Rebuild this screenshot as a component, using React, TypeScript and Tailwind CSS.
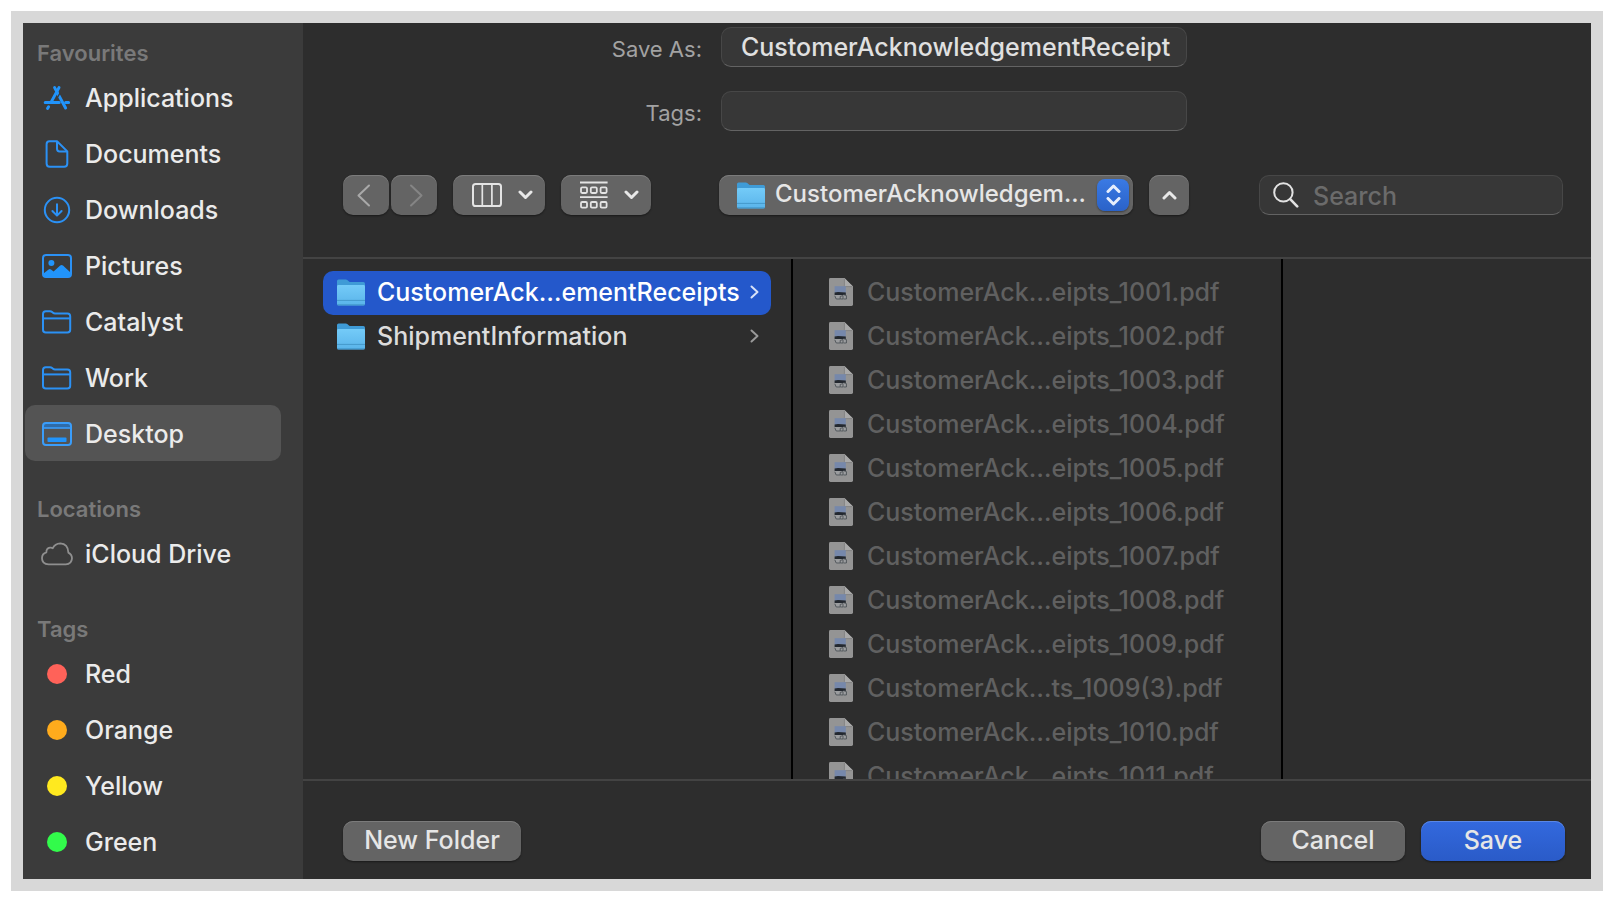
import { useState, type ReactNode } from "react";

function AppsIcon() {
  return (
    <svg width="28" height="26" viewBox="0 0 28 26" fill="none" stroke="#2194fb" strokeWidth="3" strokeLinecap="round">
      <path d="M16 2.6 8.4 16.6M5.6 21.8 4.6 23.4" />
      <path d="M11.6 2.6 22.6 23" />
      <path d="M2.2 17.4H16.2M22.6 17.4H25.6" />
      <path d="M17.2 7.6 14.4 12.6" stroke="#3b3b3b" strokeWidth="1.2" />
    </svg>
  );
}

function DocumentIcon() {
  return (
    <svg width="24" height="28" viewBox="0 0 24 28" fill="none" stroke="#2b91f5" strokeWidth="2" strokeLinejoin="round">
      <path d="M4.5 1.2H12L22.3 11.4V23.6Q22.3 26.8 19.1 26.8H4.7Q1.6 26.8 1.6 23.6V4.2Q1.6 1.2 4.5 1.2Z" />
      <path d="M12 1.6V8.8Q12 11.4 14.6 11.4H22" />
    </svg>
  );
}

function DownloadIcon() {
  return (
    <svg width="28" height="28" viewBox="0 0 28 28" fill="none" stroke="#2b91f5" strokeWidth="2" strokeLinecap="round" strokeLinejoin="round">
      <circle cx="14" cy="14" r="12.2" />
      <path d="M14 8.2V19.4M9.4 15 14 19.6 18.6 15" />
    </svg>
  );
}

function PictureIcon() {
  return (
    <svg width="30" height="24" viewBox="0 0 30 24">
      <rect x="1" y="1" width="28" height="22" rx="3" fill="none" stroke="#2b91f5" strokeWidth="2" />
      <circle cx="9.4" cy="9" r="3" fill="#2194fb" />
      <path d="M1.5 19.6 6.6 15.4Q7.8 14.5 9 15.5L11.6 17.6 18.2 11.6Q19.6 10.4 21 11.6L28.5 18.4V20.5Q28.5 23 26 23H4Q1.5 23 1.5 20.5Z" fill="#2194fb" />
    </svg>
  );
}

function FolderOutlineIcon() {
  return (
    <svg width="30" height="24" viewBox="0 0 30 24" fill="none" stroke="#2b91f5" strokeWidth="2" strokeLinejoin="round">
      <path d="M1 4Q1 1.2 3.8 1.2H8Q9.2 1.2 10.1 2L11 2.8Q11.8 3.5 13 3.5H25.4Q28.2 3.5 28.2 6.3V19.8Q28.2 22.6 25.4 22.6H3.8Q1 22.6 1 19.8Z" />
      <path d="M1 8.4H28.2" />
    </svg>
  );
}

function DesktopIcon() {
  return (
    <svg width="30" height="24" viewBox="0 0 30 24">
      <path d="M1 4.5Q1 1 4.5 1H25.5Q29 1 29 4.5V6H1Z" fill="#2f6ba8" />
      <rect x="1" y="1" width="28" height="22" rx="3" fill="none" stroke="#3a9dfa" strokeWidth="2" />
      <path d="M1 6H29" stroke="#3a9dfa" strokeWidth="1.6" />
      <rect x="5.5" y="15.6" width="19" height="4.4" rx="0.8" fill="#2194fb" />
    </svg>
  );
}

function CloudIcon() {
  return (
    <svg width="32" height="24" viewBox="0 0 32 24" fill="none" stroke="#8f8f8f" strokeWidth="1.8" strokeLinejoin="round">
      <path d="M7.6 22.4Q1 22 1 16.2 1 11.6 5.4 10.4 5.2 6.2 9 5.7 10.6 5.5 11.8 6.2 14 1.6 19.3 1.4 27 1.8 27.4 10.6 31 12.4 31 16.4 30.6 22 24.8 22.4Z" />
    </svg>
  );
}

function Dot({ color }: { color: string }) {
  return (
    <svg width="20" height="20" viewBox="0 0 20 20">
      <circle cx="10" cy="10" r="10" fill={color} />
    </svg>
  );
}

function BlueFolder() {
  return (
    <svg className="shrink-0" width="28" height="27" viewBox="0 0 28 27">
      <defs>
        <linearGradient id="folder-front" x1="0" y1="0" x2="0" y2="1">
          <stop offset="0" stopColor="#74cbf8" />
          <stop offset="1" stopColor="#5ab4ea" />
        </linearGradient>
      </defs>
      <path d="M0 2Q0 .4 1.6 .4H8.6Q9.8 .4 10.6 1.2L12 2.6Q12.6 3.1 13.6 3.1H26.4Q28 3.1 28 4.7V12H0Z" fill="#3f9bd6" />
      <path d="M0 7.4Q0 6 1.4 6H26.6Q28 6 28 7.4V24.8Q28 26.4 26.4 26.4H1.6Q0 26.4 0 24.8Z" fill="url(#folder-front)" />
      <path d="M0 21.4H28" stroke="#4599cb" strokeWidth="1" />
      <path d="M.4 25.9H27.6" stroke="#3f93c6" strokeWidth="1" />
    </svg>
  );
}

function PdfIcon() {
  return (
    <svg className="shrink-0" width="24" height="28" viewBox="0 0 24 28">
      <path d="M0 1.4Q0 0 1.4 0H15.4L24 8.6V26.6Q24 28 22.6 28H1.4Q0 28 0 26.6Z" fill="#949494" />
      <path d="M15.4 0 24 8.6H16.4Q15.4 8.6 15.4 7.6Z" fill="#a9a9a9" />
      <path d="M15.4 1V7.6Q15.4 8.6 16.4 8.6H23" stroke="#777" strokeWidth=".7" fill="none" />
      <rect x="5.6" y="8.2" width="11.2" height="6.6" fill="#7688ab" />
      <path d="M5.6 14.6 9 14 16.8 14.4V17H5.6Z" fill="#23282f" />
      <path d="M5.6 17H17.4V21.4H7Z" fill="#9b9d9f" />
      <path d="M5.8 17.8 7.2 21H11M11.2 18.4 14 17.6V21H11.2ZM14.4 16.6 17.4 17.6V21H14.4" stroke="#4c5156" strokeWidth=".9" fill="none" />
    </svg>
  );
}

function Chevron({ d, width, height, stroke, weight }: { d: string; width: number; height: number; stroke: string; weight: number }) {
  return (
    <svg className="shrink-0" width={width} height={height} viewBox={`0 0 ${width} ${height}`} fill="none" stroke={stroke} strokeWidth={weight} strokeLinecap="round" strokeLinejoin="round">
      <path d={d} />
    </svg>
  );
}

function ColumnsIcon() {
  return (
    <svg width="30" height="24" viewBox="0 0 30 24" fill="none" stroke="#e4e4e4">
      <rect x="1" y="1" width="28" height="22" rx="2.6" strokeWidth="2" />
      <path d="M10.3 1V23M19.9 1V23" strokeWidth="1.7" />
    </svg>
  );
}

function GroupIcon() {
  const xs = [1, 10.8, 20.6];
  return (
    <svg width="28" height="28" viewBox="0 0 28 28" fill="none" stroke="#e4e4e4" strokeWidth="1.8">
      <path d="M0 1.5H27.6M0 16.2H27.6" />
      {xs.map((x) => (
        <rect key={x} x={x} y="6.4" width="6" height="5.6" rx="1.2" />
      ))}
      {xs.map((x) => (
        <rect key={x} x={x} y="21" width="6" height="5.6" rx="1.2" />
      ))}
    </svg>
  );
}

const control =
  "flex h-10 items-center rounded-[10px] bg-[#646464] shadow-[inset_0_1px_0_#7b7b7b,0_1px_2px_rgba(0,0,0,0.45)]";
const field =
  "h-10 rounded-[10px] border border-[#474747] border-b-[#636363] bg-[#373737] outline-none";

type Item = { name: string; icon: ReactNode };

const sections: { title: string; items: Item[] }[] = [
  {
    title: "Favourites",
    items: [
      { name: "Applications", icon: <AppsIcon /> },
      { name: "Documents", icon: <DocumentIcon /> },
      { name: "Downloads", icon: <DownloadIcon /> },
      { name: "Pictures", icon: <PictureIcon /> },
      { name: "Catalyst", icon: <FolderOutlineIcon /> },
      { name: "Work", icon: <FolderOutlineIcon /> },
      { name: "Desktop", icon: <DesktopIcon /> },
    ],
  },
  { title: "Locations", items: [{ name: "iCloud Drive", icon: <CloudIcon /> }] },
  {
    title: "Tags",
    items: [
      { name: "Red", icon: <Dot color="#ff6259" /> },
      { name: "Orange", icon: <Dot color="#ffab1c" /> },
      { name: "Yellow", icon: <Dot color="#ffe91f" /> },
      { name: "Green", icon: <Dot color="#32fb4b" /> },
    ],
  },
];

const folders = ["CustomerAck…ementReceipts", "ShipmentInformation"];

const files = [
  "eipts_1001",
  "eipts_1002",
  "eipts_1003",
  "eipts_1004",
  "eipts_1005",
  "eipts_1006",
  "eipts_1007",
  "eipts_1008",
  "eipts_1009",
  "ts_1009(3)",
  "eipts_1010",
  "eipts_1011",
].map((end) => `CustomerAck…${end}.pdf`);

function Sidebar() {
  const [active, setActive] = useState("Desktop");
  return (
    <nav className="flex w-[280px] shrink-0 flex-col gap-[30px] overflow-hidden bg-[#3b3b3b] pt-3 pr-[22px] pl-0.5">
      {sections.map((section) => (
        <section key={section.title}>
          <h2 className="flex h-[34px] items-center pt-0.5 pl-3 text-[22px] font-semibold text-[#797979]">{section.title}</h2>
          <ul>
            {section.items.map((item) => (
              <li key={item.name}>
                <button
                  type="button"
                  onClick={() => setActive(item.name)}
                  className={`flex h-14 w-full items-center gap-3 rounded-[10px] pt-0.5 pl-4 text-[#ebebeb] ${active === item.name ? "bg-[#545454]" : ""}`}
                >
                  <span className="flex w-8 justify-center">{item.icon}</span>
                  {item.name}
                </button>
              </li>
            ))}
          </ul>
        </section>
      ))}
    </nav>
  );
}

function NameForm() {
  return (
    <div className="grid grid-cols-[1fr_466px_1fr] gap-y-6 pt-1 pl-[14px] text-[#e0e0e0]">
      <label htmlFor="save-as" className="flex items-center justify-end pt-1 pr-[19px] text-[22px] font-normal text-[#a2a2a2]">
        Save As:
      </label>
      <input id="save-as" defaultValue="CustomerAcknowledgementReceipt" className={`${field} w-full pr-[15px] pl-[19px]`} />
      <span />
      <label htmlFor="tags" className="flex items-center justify-end pt-1 pr-[19px] text-[22px] font-normal text-[#a2a2a2]">
        Tags:
      </label>
      <input id="tags" className={`${field} w-full px-[19px]`} />
    </div>
  );
}

function Toolbar() {
  return (
    <div className="flex items-center justify-between pt-11 pr-7 pb-[42px] pl-10">
      <div className="flex gap-4">
        <div className="flex gap-0.5">
          <button type="button" aria-label="Back" className={`${control} w-[46px] justify-center pr-1`}>
            <Chevron d="M12 1.5 1.5 11.5 12 21.5" width={14} height={23} stroke="#a9a9a9" weight={2} />
          </button>
          <button type="button" aria-label="Forward" className={`${control} w-[46px] justify-center pl-1`}>
            <Chevron d="M2 1.5 12.5 11.5 2 21.5" width={14} height={23} stroke="#858585" weight={2} />
          </button>
        </div>
        <button type="button" aria-label="Column view" className={`${control} w-[92px] gap-4 pl-[19px]`}>
          <ColumnsIcon />
          <Chevron d="M2 2 7.5 7.5 13 2" width={15} height={10} stroke="#e8e8e8" weight={3} />
        </button>
        <button type="button" aria-label="Group items" className={`${control} w-[90px] gap-4 pl-[19px]`}>
          <GroupIcon />
          <Chevron d="M2 2 7.5 7.5 13 2" width={15} height={10} stroke="#e8e8e8" weight={3} />
        </button>
      </div>
      <div className="mr-0.5 flex gap-4">
        <div className="relative">
          <select
            aria-label="Location"
            className={`${control} w-[414px] appearance-none pr-10 pb-0.5 pl-14 text-2xl font-medium text-[#e6e6e6] outline-none`}
          >
            <option>CustomerAcknowledgem…</option>
          </select>
          <span className="pointer-events-none absolute inset-y-0 left-[18px] flex items-center">
            <BlueFolder />
          </span>
          <span className="pointer-events-none absolute top-1 right-1 flex size-8 flex-col items-center justify-center gap-1 rounded-lg bg-linear-to-b from-[#3a7ae4] to-[#2a62c8] shadow-[0_1px_2px_rgba(0,0,0,0.4)]">
            <Chevron d="M2 7.5 7.5 2 13 7.5" width={15} height={9} stroke="#e6eefc" weight={3} />
            <Chevron d="M2 1.5 7.5 7 13 1.5" width={15} height={9} stroke="#e6eefc" weight={3} />
          </span>
        </div>
        <button type="button" aria-label="Collapse" className={`${control} w-10 justify-center`}>
          <Chevron d="M2 8 7.5 2.5 13 8" width={15} height={10} stroke="#e8e8e8" weight={3} />
        </button>
      </div>
      <label className={`${field} flex w-[304px] items-center gap-[14px] pl-[13px]`}>
        <svg className="shrink-0" width="26" height="26" viewBox="0 0 26 26" fill="none" stroke="#e2e2e2" strokeLinecap="round">
          <circle cx="10.4" cy="10.4" r="9.2" strokeWidth="2" />
          <path d="M17.2 17.2 24.2 24.4" strokeWidth="2.6" />
        </svg>
        <input type="search" aria-label="Search" placeholder="Search" className="w-full min-w-0 bg-transparent pt-0.5 text-[#e0e0e0] outline-none placeholder:text-[#6b6b6b]" />
      </label>
    </div>
  );
}

function Browser() {
  const [selected, setSelected] = useState(folders[0]);
  return (
    <div className="flex min-h-0 flex-1 border-y-2 border-[#434343]">
      <ul className="w-[490px] shrink-0 overflow-hidden border-r-2 border-black pt-3 pr-5 pl-5">
        {folders.map((name) => {
          const on = name === selected;
          return (
            <li key={name}>
              <button
                type="button"
                onClick={() => setSelected(name)}
                className={`flex h-11 w-full items-center gap-3 rounded-[10px] pr-3 pb-0.5 pl-[14px] ${on ? "bg-[#2458cb] text-white" : "text-[#dcdcdc]"}`}
              >
                <BlueFolder />
                <span className="min-w-0 flex-1 text-left whitespace-nowrap">{name}</span>
                <Chevron d="M1.5 1.5 7.5 7 1.5 12.5" width={9} height={14} stroke={on ? "#d8e2f8" : "#9a9a9a"} weight={2} />
              </button>
            </li>
          );
        })}
      </ul>
      <ul className="w-[490px] shrink-0 overflow-hidden border-r-2 border-black pt-3 pl-9 text-[#606060]">
        {files.map((name) => (
          <li key={name} className="flex h-11 items-center gap-[14px] pb-0.5 whitespace-nowrap">
            <PdfIcon />
            {name}
          </li>
        ))}
      </ul>
    </div>
  );
}

export default function App() {
  return (
    <div className="h-screen bg-white p-[11px] font-[Inter,sans-serif] text-[25px] leading-8 font-medium">
      <div className="flex h-full overflow-hidden border-12 border-[#d8d8d8] bg-[#2d2d2d]">
        <Sidebar />
        <main className="flex min-w-0 flex-1 flex-col">
          <NameForm />
          <Toolbar />
          <Browser />
          <footer className="flex gap-4 pt-10 pr-[26px] pb-[18px] pl-10 text-[#e6e6e6]">
            <button type="button" className={`${control} mr-auto w-[178px] justify-center pb-0.5`}>
              New Folder
            </button>
            <button type="button" className={`${control} w-36 justify-center pb-0.5`}>
              Cancel
            </button>
            <button
              type="button"
              className="flex h-10 w-36 items-center justify-center rounded-[10px] bg-linear-to-b from-[#3369de] to-[#2a5bc8] pb-0.5 shadow-[inset_0_1px_0_#5a87e6,0_1px_2px_rgba(0,0,0,0.45)]"
            >
              Save
            </button>
          </footer>
        </main>
      </div>
    </div>
  );
}
